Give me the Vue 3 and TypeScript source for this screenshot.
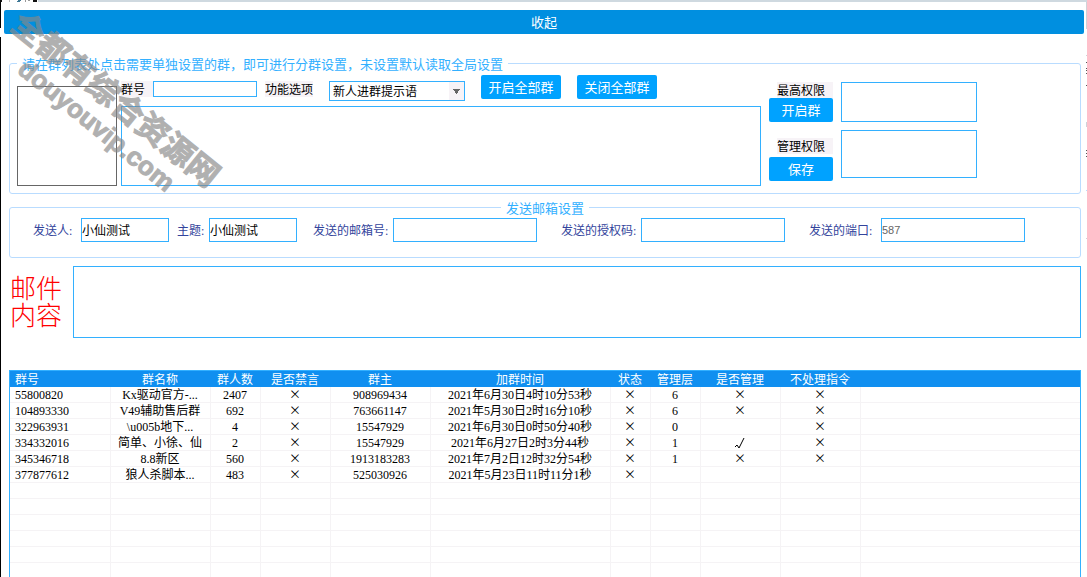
<script setup lang="ts">
import { ref } from 'vue'

interface Group {
  id: string
  name: string
  members: string
  muted: string
  owner: string
  joined: string
  status: string
  level: string
  admin: string
  ignore: string
}

const columns: string[] = ['群号', '群名称', '群人数', '是否禁言', '群主', '加群时间', '状态', '管理层', '是否管理', '不处理指令']

const groups: Group[] = [
  { id: '55800820', name: 'Kx驱动官方-...', members: '2407', muted: '×', owner: '908969434', joined: '2021年6月30日4时10分53秒', status: '×', level: '6', admin: '×', ignore: '×' },
  { id: '104893330', name: 'V49辅助售后群', members: '692', muted: '×', owner: '763661147', joined: '2021年5月30日2时16分10秒', status: '×', level: '6', admin: '×', ignore: '×' },
  { id: '322963931', name: '\\u005b地下...', members: '4', muted: '×', owner: '15547929', joined: '2021年6月30日0时50分40秒', status: '×', level: '0', admin: '', ignore: '×' },
  { id: '334332016', name: '简单、小徐、仙', members: '2', muted: '×', owner: '15547929', joined: '2021年6月27日2时3分44秒', status: '×', level: '1', admin: '√', ignore: '×' },
  { id: '345346718', name: '8.8新区', members: '560', muted: '×', owner: '1913183283', joined: '2021年7月2日12时32分54秒', status: '×', level: '1', admin: '×', ignore: '×' },
  { id: '377877612', name: '狼人杀脚本...', members: '483', muted: '×', owner: '525030926', joined: '2021年5月23日11时11分1秒', status: '×', level: '', admin: '', ignore: '' },
]

const emptyRows = 6

const groupId = ref('')
const option = ref('新人进群提示语')
const message = ref('')
const topRights = ref('')
const adminRights = ref('')
const sender = ref('小仙测试')
const subject = ref('小仙测试')
const mailbox = ref('')
const authCode = ref('')
const port = ref('587')
const mailBody = ref('')

function cells(g: Group): string[] {
  return [g.id, g.name, g.members, g.muted, g.owner, g.joined, g.status, g.level, g.admin, g.ignore]
}
</script>

<template>
  <main class="window">
    <div class="edge-top"></div>
    <svg class="edge-marks" width="38" height="2" viewBox="0 0 38 2" aria-hidden="true">
      <path d="M0 0h2v2h-2z M33 0h4v2h-4z" fill="#111" />
      <path d="M9 0h1v2h-1z" fill="#bbb" />
      <path d="M18 0h3v1h-1v1h-3v-1h1z" fill="#3f7896" />
      <path d="M25 0h1v2h-1z M28 0h2v1h-2z" fill="#999" />
    </svg>
    <div class="edge-left"></div>
    <svg class="edge-right" width="1" height="240" viewBox="0 0 1 240" aria-hidden="true">
      <path d="M0 2h1v27h-1z M0 55h1v1h-1z M0 122h1v5h-1z M0 238h1v1h-1z" fill="#cfd3d9" />
      <path d="M0 62h1v1h-1z M0 68h1v1h-1z M0 70h1v1h-1z M0 73h1v1h-1z M0 85h1v1h-1z M0 150h1v1h-1z M0 153h1v1h-1z M0 156h1v1h-1z" fill="#555" />
      <path d="M0 190h1v1h-1z" fill="#b9dcff" />
    </svg>

    <button class="btn collapse" type="button">收起</button>

    <fieldset class="panel group-panel">
      <legend>请在群列表处点击需要单独设置的群，即可进行分群设置，未设置默认读取全局设置</legend>
      <div class="group-body">
        <div class="group-list" role="listbox" aria-label="群列表"></div>
        <div class="editor">
          <div class="toolbar">
            <label class="tag tag-id" for="gid">群号</label>
            <input id="gid" v-model="groupId" class="box gid" type="text" />
            <label class="tag tag-option" for="opt">功能选项</label>
            <span class="select">
              <select id="opt" v-model="option" class="box">
                <option>新人进群提示语</option>
              </select>
              <svg class="arrow" width="15" height="18" viewBox="0 0 15 18" aria-hidden="true">
                <path d="M0 0h15v18h-15z" fill="#f7f3f7" />
                <path d="M4 7h7v1h-1v1h-1v2h-1v1h-1v-1h-1v-2h-1v-1h-1z" fill="#666" />
              </svg>
            </span>
            <button class="btn wide" type="button">开启全部群</button>
            <button class="btn wide" type="button">关闭全部群</button>
          </div>
          <textarea v-model="message" class="box message" aria-label="提示语"></textarea>
        </div>
        <div class="rights">
          <label class="tag" for="top">最高权限</label>
          <button class="btn" type="button">开启群</button>
          <label class="tag second" for="adm">管理权限</label>
          <button class="btn save" type="button">保存</button>
        </div>
        <div class="rights-boxes">
          <textarea id="top" v-model="topRights" class="box top-box"></textarea>
          <textarea id="adm" v-model="adminRights" class="box adm-box"></textarea>
        </div>
      </div>
    </fieldset>

    <fieldset class="panel mail-panel">
      <legend>发送邮箱设置</legend>
      <div class="fields">
        <div class="field"><label class="w48" for="sender">发送人:</label><input id="sender" v-model="sender" class="box short" type="text" /></div>
        <div class="field near"><label class="w32" for="subject">主题:</label><input id="subject" v-model="subject" class="box short" type="text" /></div>
        <div class="field mid"><label class="w80" for="mailbox">发送的邮箱号:</label><input id="mailbox" v-model="mailbox" class="box long" type="text" /></div>
        <div class="field far"><label class="w80" for="auth">发送的授权码:</label><input id="auth" v-model="authCode" class="box long" type="text" /></div>
        <div class="field far"><label class="w72" for="port">发送的端口:</label><input id="port" v-model="port" class="box long port" type="text" /></div>
      </div>
    </fieldset>

    <section class="mail">
      <label class="mail-label" for="body">邮件<br />内容</label>
      <textarea id="body" v-model="mailBody" class="box mail-body"></textarea>
    </section>

    <section class="table-wrap">
      <table>
        <colgroup>
          <col class="c101" /><col class="c100" /><col class="c50" /><col class="c70" /><col class="c100" />
          <col class="c180" /><col class="c40" /><col class="c50" /><col class="c80" /><col class="c80" /><col />
        </colgroup>
        <thead>
          <tr>
            <th v-for="c in columns" :key="c" scope="col">{{ c }}</th>
            <td></td>
          </tr>
        </thead>
        <tbody>
          <tr v-for="g in groups" :key="g.id">
            <td v-for="(v, i) in cells(g)" :key="i" :class="{ mark: v === '×' }">
              <svg v-if="v === '√'" class="tick" width="10" height="11" viewBox="0 0 10 11" role="img" aria-label="√">
                <path d="M0 9L2 7L4 10L9 0" fill="none" stroke="#000" stroke-width="1" />
              </svg>
              <template v-else>{{ v }}</template>
            </td>
            <td></td>
          </tr>
          <tr v-for="n in emptyRows" :key="n">
            <td v-for="i in 11" :key="i"></td>
          </tr>
        </tbody>
      </table>
    </section>

    <div class="watermark" aria-hidden="true">
      <span class="wm-name">全都有综合资源网</span>
      <span class="wm-site">douyouvip.com</span>
    </div>
  </main>
</template>

<style>
body {
  margin: 0;
  background: #fff;
}
</style>

<style scoped>
.window {
  position: relative;
  box-sizing: border-box;
  display: flex;
  flex-direction: column;
  height: 100vh;
  padding: 10px 6px 0 9px;
  overflow: hidden;
  background: #fff;
  color: #000;
  font: 12px/16px "Liberation Serif", "Noto Sans CJK SC", sans-serif;
}
.window * {
  box-sizing: border-box;
}
button,
input,
select,
textarea {
  margin: 0;
  font: inherit;
  color: inherit;
}
.edge-top {
  position: absolute;
  top: 0;
  left: 38px;
  right: 0;
  height: 2px;
  background: #cfd9e0;
}
.edge-marks {
  position: absolute;
  top: 0;
  left: 0;
}
.edge-right {
  position: absolute;
  top: 0;
  right: 0;
}
.edge-left {
  position: absolute;
  top: 2px;
  bottom: 0;
  left: 0;
  width: 1px;
  background: linear-gradient(#000 26px, #fff 26px, #fff 35px, #000 35px);
}
.btn {
  display: block;
  height: 24px;
  padding: 0;
  border: 0;
  border-radius: 2px;
  background: #00a2ff;
  color: #fff;
  font: 13px/24px "Noto Sans CJK SC", sans-serif;
  text-align: center;
}
.collapse {
  flex: none;
  margin: 0 -3px 0 -5px;
  background: #008fe0;
}
.box {
  display: block;
  padding: 0;
  border: 1px solid #33b0ff;
  border-radius: 0;
  outline: 0;
  background: #fff;
  resize: none;
}
.panel {
  flex: none;
  min-width: 0;
  margin: 0;
  border: 1px solid #b9dcff;
  border-radius: 3px;
}
.panel legend {
  height: 20px;
  padding: 0 5px;
  color: #33b0ff;
  font: 13px/22px "Noto Sans CJK SC", sans-serif;
}
.group-panel {
  margin-top: 19px;
  padding: 0 103px 7px 7px;
}
.group-body {
  display: flex;
  align-items: flex-start;
}
.group-list {
  flex: none;
  width: 100px;
  height: 100px;
  margin: 13px 4px 0 0;
  border: 1px solid #666;
}
.editor {
  flex: 1;
  min-width: 0;
}
.toolbar {
  display: flex;
  align-items: flex-start;
  height: 33px;
  padding-top: 2px;
}
.tag {
  height: 16px;
  background: #f7f3f7;
  line-height: 18px;
  white-space: nowrap;
}
.toolbar .tag,
.toolbar .gid,
.toolbar .select {
  margin-top: 6px;
}
.tag-id {
  width: 32px;
}
.tag-option {
  width: 48px;
  margin: 0 16px 0 8px;
}
.gid {
  width: 104px;
  height: 16px;
}
.select {
  position: relative;
  width: 136px;
}
.select select {
  width: 100%;
  height: 20px;
  padding: 1px 0 0 3px;
  appearance: none;
}
.arrow {
  position: absolute;
  top: 1px;
  right: 1px;
  pointer-events: none;
}
.wide {
  width: 80px;
  margin-left: 16px;
}
.message {
  width: 100%;
  height: 80px;
}
.rights {
  display: flex;
  flex-direction: column;
  width: 64px;
  margin: 9px 8px 0;
}
.rights .tag {
  margin-left: 8px;
}
.rights .second {
  margin-top: 16px;
}
.save {
  margin-top: 3px;
}
.rights-boxes {
  display: flex;
  flex-direction: column;
  gap: 8px;
  width: 136px;
  margin-top: 9px;
}
.top-box {
  height: 40px;
}
.adm-box {
  height: 48px;
}
.mail-panel {
  margin-top: 3px;
  padding: 1px 7px 15px;
}
.mail-panel legend {
  margin: 0 auto;
}
.fields {
  display: flex;
  margin-left: 16px;
}
.field {
  display: flex;
}
.field label {
  height: 24px;
  color: #33449c;
  line-height: 26px;
  white-space: nowrap;
}
.field input {
  height: 24px;
}
.near {
  margin-left: 8px;
}
.mid {
  margin-left: 16px;
}
.far {
  margin-left: 24px;
}
.w32 {
  width: 32px;
}
.w48 {
  width: 48px;
}
.w72 {
  width: 72px;
}
.w80 {
  width: 80px;
}
.short {
  width: 88px;
}
.long {
  width: 144px;
}
.port {
  color: #666;
  font: 11px/16px "Liberation Sans", sans-serif;
}
.mail {
  display: flex;
  flex: none;
  margin: 8px 0 32px;
}
.mail-label {
  width: 64px;
  padding: 7px 0 0 1px;
  color: #f00;
  font: 300 26px/27px "Noto Sans CJK SC", sans-serif;
}
.mail-body {
  flex: 1;
  height: 72px;
}
.table-wrap {
  flex: 1;
  min-height: 0;
  overflow: hidden;
  border: 1px solid #33b0ff;
  border-bottom: 0;
}
table {
  width: 100%;
  table-layout: fixed;
  border-collapse: separate;
  border-spacing: 0;
}
th,
td {
  height: 16px;
  padding: 2px 1px 0 0;
  font-weight: 400;
  line-height: 13px;
  text-align: center;
  white-space: nowrap;
}
th {
  padding-right: 2px;
  line-height: 14px;
}
th:first-child,
td:first-child {
  padding-left: 5px;
  text-align: left;
}
thead {
  background: #108ff0;
  color: #fff;
}
tbody td {
  border-right: 1px solid #f5f3f5;
  border-bottom: 1px solid #f5f3f5;
}
tbody td:last-child {
  border-right: 0;
}
.mark {
  padding: 0 1px 2px 0;
  font-family: "Noto Sans CJK SC", sans-serif;
}
.tick {
  display: block;
  margin: 0 auto;
}
.c40 {
  width: 40px;
}
.c50 {
  width: 50px;
}
.c70 {
  width: 70px;
}
.c80 {
  width: 80px;
}
.c100 {
  width: 100px;
}
.c101 {
  width: 101px;
}
.c180 {
  width: 180px;
}
.watermark {
  position: absolute;
  top: 0;
  left: 0;
  color: #888;
  opacity: 0.66;
  pointer-events: none;
  white-space: nowrap;
}
.watermark span {
  position: absolute;
  line-height: 32px;
  font-weight: 700;
  transform-origin: 0 50%;
  transform: rotate(39deg);
}
.wm-name {
  top: 1px;
  left: 18px;
  font-family: "Noto Sans CJK SC", sans-serif;
  font-size: 32px;
  -webkit-text-stroke: 1px #888;
}
.wm-site {
  top: 49px;
  left: 22px;
  font-family: "Liberation Sans", sans-serif;
  font-size: 26px;
  -webkit-text-stroke: 1px #888;
}
</style>
